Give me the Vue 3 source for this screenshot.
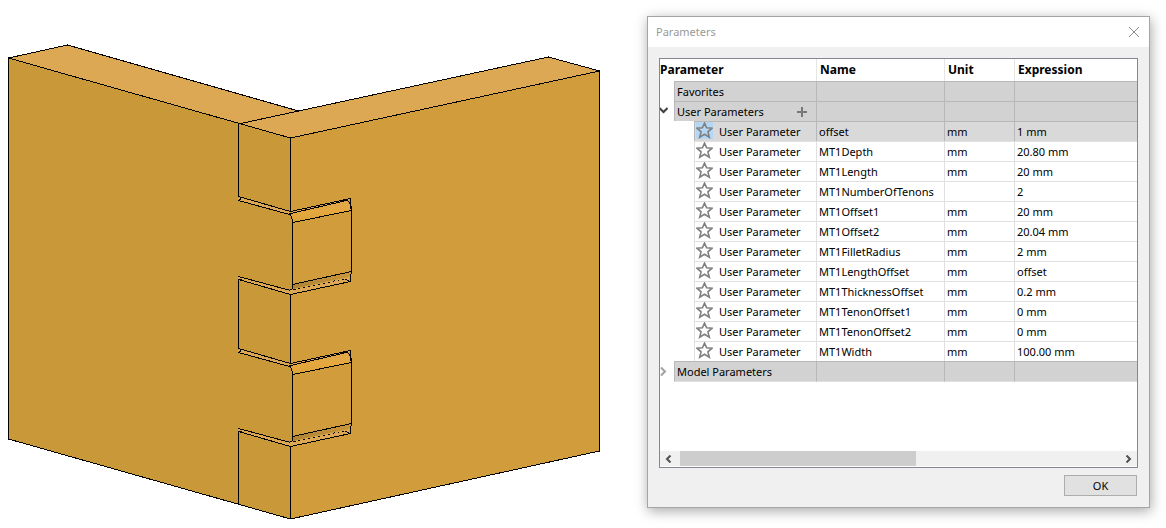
<script setup>
import { ref } from 'vue'

const columns = ['Parameter', 'Name', 'Unit', 'Expression']
const userParameters = ref([
  { name: 'offset', unit: 'mm', expression: '1 mm', selected: true },
  { name: 'MT1Depth', unit: 'mm', expression: '20.80 mm' },
  { name: 'MT1Length', unit: 'mm', expression: '20 mm' },
  { name: 'MT1NumberOfTenons', unit: '', expression: '2' },
  { name: 'MT1Offset1', unit: 'mm', expression: '20 mm' },
  { name: 'MT1Offset2', unit: 'mm', expression: '20.04 mm' },
  { name: 'MT1FilletRadius', unit: 'mm', expression: '2 mm' },
  { name: 'MT1LengthOffset', unit: 'mm', expression: 'offset' },
  { name: 'MT1ThicknessOffset', unit: 'mm', expression: '0.2 mm' },
  { name: 'MT1TenonOffset1', unit: 'mm', expression: '0 mm' },
  { name: 'MT1TenonOffset2', unit: 'mm', expression: '0 mm' },
  { name: 'MT1Width', unit: 'mm', expression: '100.00 mm' },
])
const tenonOffsets = [0, 152]
</script>

<template>
  <main class="workspace">
    <svg class="model" viewBox="0 0 647 528" role="img" aria-label="Mortise and tenon joint">
      <defs>
        <linearGradient id="fillet" x1="0" y1="0" x2="0" y2="1">
          <stop offset="0" stop-color="#dfa74a" />
          <stop offset="0.5" stop-color="#e6a83e" />
          <stop offset="1" stop-color="#d9a13c" />
        </linearGradient>
        <linearGradient id="shade" x1="0" y1="0" x2="0" y2="1">
          <stop offset="0" stop-color="#cf9b3b" />
          <stop offset="1" stop-color="#a98035" />
        </linearGradient>
      </defs>
      <g class="faces">
        <path d="M8 58 L67 45 L298 111 L548 57 L600 71 L290 138 Z" fill="#dda853" />
        <path d="M8 58 L290 138 V519 L8 439 Z" fill="#c99838" />
        <path d="M290 138 L600 71 V451 L290 519 Z" fill="#d09c3c" />
      </g>
      <g class="edges">
        <path d="M8.5 58 L67.5 45 L298.5 111 L548.5 57 L599.5 71 V451 L290.5 519 L8.5 439 Z" />
        <path d="M8.5 58 L290.5 138 L599.5 71 M238.5 124 L298.5 111" />
        <path d="M238.5 124 V200 M290.5 138 V211" />
        <path d="M238.5 276 V352 M290.5 294 V363" />
        <path d="M238.5 428 V504 M290.5 446 V519" />
      </g>
      <g v-for="dy in tenonOffsets" :key="dy" :transform="`translate(0 ${dy})`">
        <g class="faces">
          <path d="M288 213 L292 222 V290 L289 291 Z" fill="#c99838" />
          <path d="M238 197 L290 211 L289 215 L238 200 Z" fill="#dda853" />
          <path d="M290 213 L346 201 Q351 203 351 210 L292 223 Q292 217 290 213 Z" fill="url(#fillet)" />
          <path d="M290 211 L351 198 L349 201 L290 214 Z" fill="#dda853" />
          <path d="M238 276 L289 290 L350 277 V282 L290 294 L238 280 Z" fill="#dda853" />
          <path d="M292 284 L351 271 V276 L292 289 Z" fill="url(#shade)" />
        </g>
        <g class="edges">
          <path d="M238.5 196.5 L290.5 211.5 L350.5 198.5 V208.5" />
          <path d="M238.5 200.5 L289.5 214.5 M241 198.5 L238.5 200.5" />
          <path d="M290.5 213.5 L346.5 200.5 M343 200.5 H348" />
          <path d="M289.5 213.5 Q292.5 217.5 292.5 222.5 V288.5 L289.5 290.5" />
          <path d="M347.5 200.5 Q351.5 203.5 351.5 210.5 V273.5" />
          <path d="M292.5 222.5 L351.5 210.5 M292.5 284.5 L351.5 271.5" />
          <path d="M238.5 276.5 L290.5 290.5 M238.5 279.5 L290.5 294.5 L350.5 281.5 V273.5" />
          <path d="M238.5 279.5 H242 M345.5 279.5 L350.5 281.5" />
          <path d="M293.5 289.5 L346.5 278.5" stroke-dasharray="2 3" />
        </g>
      </g>
    </svg>

    <section class="dialog" role="dialog" aria-labelledby="dialog-title">
      <header class="titlebar">
        <h1 id="dialog-title">Parameters</h1>
        <button class="close" type="button" aria-label="Close">
          <svg width="12" height="12" viewBox="0 0 12 12"><path d="M1 1 L11 11 M11 1 L1 11" /></svg>
        </button>
      </header>
      <div class="content">
        <div class="list">
          <div class="rows">
            <table>
              <colgroup><col class="c1" /><col class="c2" /><col class="c3" /><col /></colgroup>
              <thead>
                <tr><th v-for="c in columns" :key="c" scope="col">{{ c }}</th></tr>
              </thead>
              <tbody>
                <tr class="group">
                  <td><div class="tree"><span class="label">Favorites</span></div></td>
                  <td></td><td></td><td></td>
                </tr>
                <tr class="group">
                  <td>
                    <div class="tree">
                      <button class="toggle" type="button" aria-label="Collapse User Parameters">
                        <svg width="9" height="7" viewBox="0 0 9 7"><path d="M0.5 1 L4.5 5 L8.5 1" stroke="#404040" stroke-width="2" /></svg>
                      </button>
                      <span class="label">User Parameters</span>
                      <button class="add" type="button" aria-label="Add user parameter">
                        <svg width="10" height="10" viewBox="0 0 10 10"><path d="M5 0 V10 M0 5 H10" stroke="#777" stroke-width="2" /></svg>
                      </button>
                    </div>
                  </td>
                  <td></td><td></td><td></td>
                </tr>
                <tr v-for="p in userParameters" :key="p.name" class="item" :class="{ selected: p.selected }">
                  <td>
                    <div class="tree">
                      <button class="star" type="button" :aria-label="`Favorite ${p.name}`">
                        <svg width="17" height="17" viewBox="0 0 17 17"><path d="M8.5 1.2 L10.6 5.8 L16 6.2 L11.9 9.8 L13.3 15.2 L8.5 12.3 L3.7 15.2 L5.1 9.8 L1 6.2 L6.4 5.8 Z" /></svg>
                      </button>
                      <span class="label">User Parameter</span>
                    </div>
                  </td>
                  <td>{{ p.name }}</td>
                  <td>{{ p.unit }}</td>
                  <td>{{ p.expression }}</td>
                </tr>
                <tr class="group last">
                  <td>
                    <div class="tree">
                      <button class="toggle" type="button" aria-label="Expand Model Parameters">
                        <svg width="9" height="9" viewBox="0 0 9 9"><path d="M2 0.5 L6 4.5 L2 8.5" stroke="#a0a0a0" stroke-width="2" /></svg>
                      </button>
                      <span class="label">Model Parameters</span>
                    </div>
                  </td>
                  <td></td><td></td><td></td>
                </tr>
              </tbody>
            </table>
          </div>
          <div class="scrollbar">
            <button class="back" type="button" aria-label="Scroll left">
              <svg width="7" height="8" viewBox="0 0 7 8"><path d="M5.5 0.5 L2 4 L5.5 7.5" stroke="#505050" stroke-width="2" /></svg>
            </button>
            <div class="track"><div class="thumb"></div></div>
            <button class="forward" type="button" aria-label="Scroll right">
              <svg width="7" height="8" viewBox="0 0 7 8"><path d="M1.5 0.5 L5 4 L1.5 7.5" stroke="#505050" stroke-width="2" /></svg>
            </button>
          </div>
        </div>
        <footer><button class="ok" type="button">OK</button></footer>
      </div>
    </section>
  </main>
</template>

<style>
body {
  margin: 0;
  background: #fff;
}
</style>

<style scoped>
* {
  box-sizing: border-box;
}
.workspace {
  display: grid;
  grid-template-columns: minmax(0, 647fr) minmax(0, 503fr);
  align-items: start;
  padding-right: 16px;
  overflow: hidden;
  font: 11px/16px "Noto Sans", "Open Sans", sans-serif;
  color: #000;
}
.model {
  display: block;
  width: 100%;
  height: auto;
}
.edges {
  fill: none;
  stroke: #000;
  stroke-width: 1;
  shape-rendering: crispEdges;
}
button {
  padding: 0;
  border: 0;
  background: none;
  font: inherit;
  color: inherit;
}
button svg {
  display: block;
  fill: none;
}
.dialog {
  margin: 16px 0 20px;
  border: 1px solid #a5a5a5;
  background: #f0f0f0;
  box-shadow: 1px 3px 12px rgba(0, 0, 0, 0.35);
}
.titlebar {
  display: flex;
  align-items: center;
  justify-content: space-between;
  height: 30px;
  padding: 0 9px 0 8px;
  background: #fff;
}
.titlebar h1 {
  margin: 0;
  font-size: 11px;
  font-weight: 400;
  color: #999;
}
.close svg {
  stroke: #8c8c8c;
  stroke-width: 1;
}
.content {
  padding: 11px;
}
.list {
  border: 1px solid #828790;
  background: #fff;
}
.rows {
  min-height: 392px;
  overflow: hidden;
}
table {
  width: 100%;
  table-layout: fixed;
  border-collapse: separate;
  border-spacing: 0;
}
.c1 {
  width: 156px;
}
.c2 {
  width: 128px;
}
.c3 {
  width: 70px;
}
th {
  height: 22px;
  padding: 0 0 0 3px;
  border-left: 1px solid #e5e5e5;
  text-align: left;
  font-size: 12px;
  font-weight: 700;
}
th:first-child {
  padding: 0;
  border: 0;
}
td {
  height: 20px;
  padding: 0 0 0 2px;
  border-top: 1px solid #e0e0e0;
  border-left: 1px solid #e0e0e0;
  white-space: nowrap;
}
td:first-child {
  padding: 0 0 0 34px;
  border: 0;
}
.group td:first-child {
  padding-left: 14px;
}
.tree {
  position: relative;
  display: flex;
  align-items: center;
  height: 20px;
  border-top: 1px solid #e0e0e0;
  border-left: 1px solid #e0e0e0;
}
.group .tree {
  padding-left: 2px;
}
.group td:not(:first-child),
.group .tree {
  background: #d2d2d2;
  border-color: #b8b8b8;
}
.selected td:not(:first-child),
.selected .tree {
  background: #d9d9d9;
  border-color: #b8b8b8;
}
.last td:not(:first-child),
.last .tree {
  height: 21px;
  border-bottom: 1px solid #e0e0e0;
}
.toggle {
  position: absolute;
  left: -16px;
  top: 5px;
}
.add {
  margin-left: auto;
  margin-right: 9px;
}
.star {
  margin: 0 6px 2px 1px;
}
.star svg {
  stroke: #808080;
  stroke-width: 1.6;
}
.selected .star {
  background: #b3d7f5;
}
.scrollbar {
  display: flex;
  height: 16px;
  border-bottom: 1px solid #fff;
  background: #f0f0f0;
}
.scrollbar button {
  display: flex;
  flex: none;
  align-items: center;
  justify-content: center;
  width: 20px;
}
.scrollbar .back {
  padding-right: 4px;
}
.scrollbar .forward {
  padding-left: 2px;
}
.track {
  flex: 1;
}
.thumb {
  width: 54%;
  height: 100%;
  background: #cdcdcd;
}
footer {
  display: flex;
  justify-content: flex-end;
  padding: 7px 1px 0 0;
}
.ok {
  width: 73px;
  height: 21px;
  border: 1px solid #adadad;
  background: #e1e1e1;
}
</style>
